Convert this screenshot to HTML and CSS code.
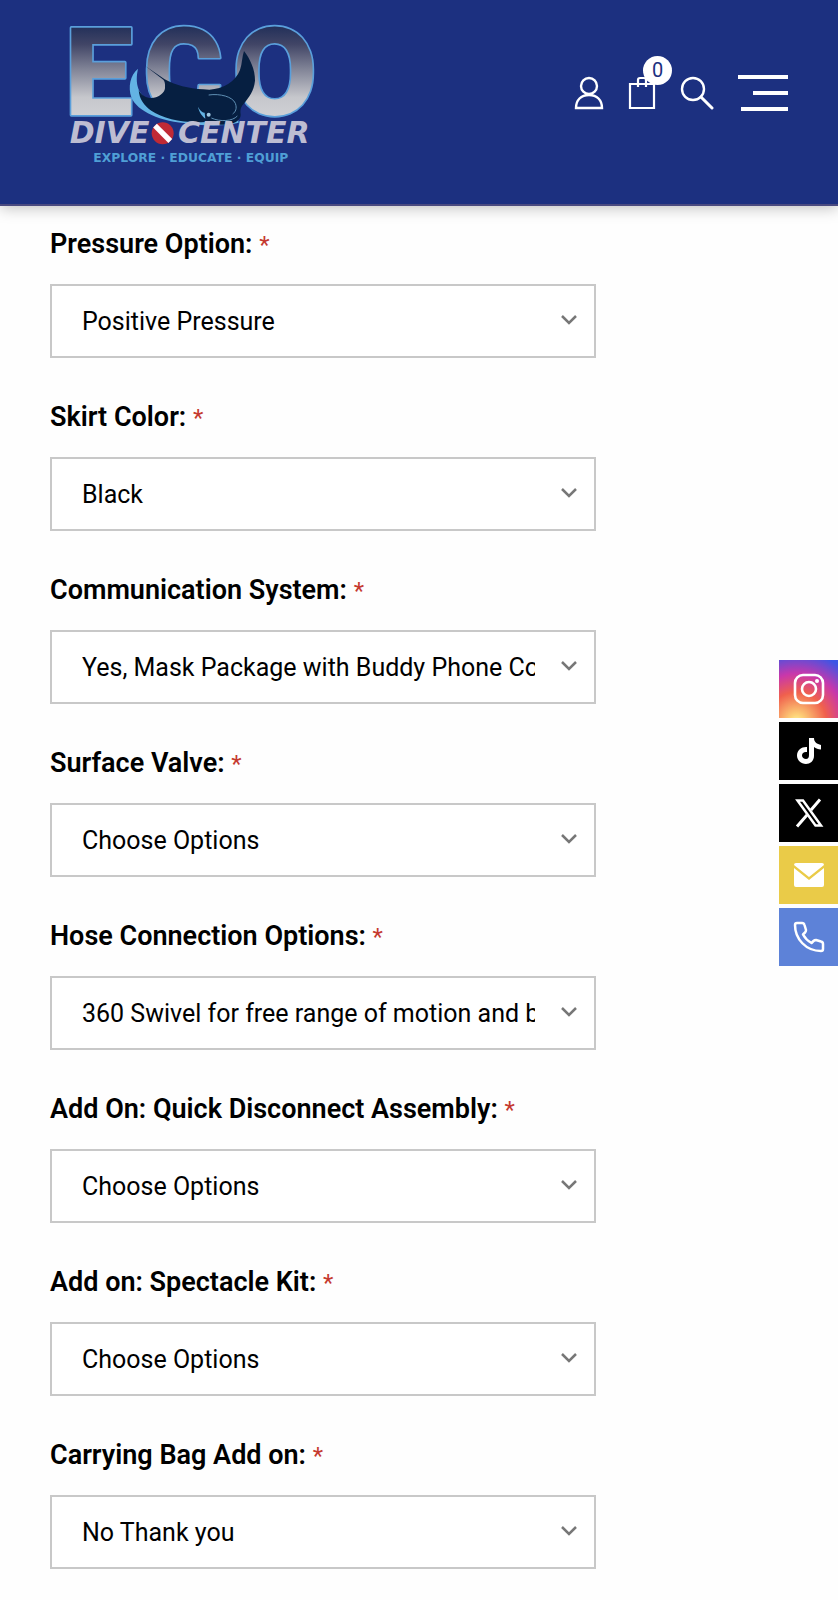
FILE: index.html
```html
<!DOCTYPE html>
<html lang="en">
  <head>
    <meta charset="UTF-8" />
    <meta name="viewport" content="width=device-width, initial-scale=1.0" />
    <title>Eco Dive Center</title>
    <link rel="stylesheet" href="styles.css">
  </head>
  <body>
    <header class="header">
      <a href="#" class="logo" aria-label="Eco Dive Center">
        <svg viewBox="0 0 870 510">
          <defs>
            <linearGradient id="metal" gradientUnits="userSpaceOnUse" x1="0" y1="50" x2="0" y2="315">
              <stop offset="0" stop-color="#23305a" />
              <stop offset="0.2" stop-color="#414566" />
              <stop offset="0.5" stop-color="#85889a" />
              <stop offset="0.8" stop-color="#c6c7cc" />
              <stop offset="1" stop-color="#cfd0d4" />
            </linearGradient>
          </defs>
          <text class="logo-eco" x="44 280 548" y="315">ECO</text>
          <path fill="#63b3e4" d="M264 176C240 195 234 232 244 262C262 305 330 335 420 341C460 347 520 350 566 338L560 300L300 270C264 256 254 220 264 176Z" />
          <path fill="#061f41" d="M286 168L344 208L356 214C390 230 430 238 478 239C520 237 556 216 570 180C577 160 576 140 582 123C600 146 616 180 615 212C612 244 596 262 584 278C572 290 570 298 572 314C572 328 560 340 530 344C500 346 490 338 466 336C400 340 340 326 304 302C282 286 268 268 266 240C276 262 300 268 318 262C334 256 346 244 345 232C346 220 344 214 340 209Z" />
          <path fill="none" stroke="#5f8fb4" stroke-width="3" d="M476 255C510 250 548 260 556 280C562 296 556 306 548 312M484 324C510 336 548 334 562 318" />
          <path fill="#63b3e4" d="M444 290C448 308 456 318 466 326L464 308C458 308 450 302 444 290Z" />
          <circle cx="476" cy="314" r="6" fill="#9fc9e4" />
          <text class="logo-name" x="59" y="399">DIVE</text>
          <text class="logo-name" x="384" y="399">CENTER</text>
          <circle cx="338" cy="370" r="33" fill="#c02a35" />
          <path stroke="#fff" stroke-width="16" d="M315 347L361 393" />
          <text class="logo-tag" x="130" y="455">EXPLORE · EDUCATE · EQUIP</text>
        </svg>
      </a>
      <nav class="nav">
        <a href="#" class="nav-link" aria-label="Account">
          <svg width="30" height="34" viewBox="0 0 30 34" fill="none" stroke="#fff" stroke-width="2.4">
            <circle cx="15" cy="10" r="8" />
            <path d="M2 32C2 24 7 19 15 19S28 24 28 32Z" />
          </svg>
        </a>
        <a href="#" class="nav-link" aria-label="Cart">
          <svg width="28" height="34" viewBox="0 0 28 34" fill="none" stroke="#fff" stroke-width="2.2">
            <path d="M2 8H26V32H2ZM10 11V4Q10 2 12 2H16Q18 2 18 4V11" />
          </svg>
          <span class="cart-count">0</span>
        </a>
        <button class="nav-link" aria-label="Search">
          <svg width="34" height="34" viewBox="0 0 34 34" fill="none" stroke="#fff" stroke-width="2.4">
            <circle cx="13" cy="13" r="11" />
            <path d="M21 21L32 32" stroke-width="3" stroke-linecap="round" />
          </svg>
        </button>
        <button class="menu-toggle" aria-label="Menu">
          <span class="bar"></span>
          <span class="bar bar-short"></span>
          <span class="bar bar-mid"></span>
        </button>
      </nav>
    </header>

    <main>
      <form class="options">
        <div class="field">
          <label for="pressure">Pressure Option: <small>*</small></label>
          <select id="pressure"><option>Positive Pressure</option></select>
        </div>
        <div class="field">
          <label for="skirt">Skirt Color: <small>*</small></label>
          <select id="skirt"><option>Black</option></select>
        </div>
        <div class="field">
          <label for="comm">Communication System: <small>*</small></label>
          <select id="comm"><option>Yes, Mask Package with Buddy Phone Communication</option></select>
        </div>
        <div class="field">
          <label for="valve">Surface Valve: <small>*</small></label>
          <select id="valve"><option>Choose Options</option></select>
        </div>
        <div class="field">
          <label for="hose">Hose Connection Options: <small>*</small></label>
          <select id="hose"><option>360 Swivel for free range of motion and better comfort</option></select>
        </div>
        <div class="field">
          <label for="disconnect">Add On: Quick Disconnect Assembly: <small>*</small></label>
          <select id="disconnect"><option>Choose Options</option></select>
        </div>
        <div class="field">
          <label for="spectacle">Add on: Spectacle Kit: <small>*</small></label>
          <select id="spectacle"><option>Choose Options</option></select>
        </div>
        <div class="field">
          <label for="bag">Carrying Bag Add on: <small>*</small></label>
          <select id="bag"><option>No Thank you</option></select>
        </div>
      </form>
    </main>

    <aside class="social">
      <a href="#" class="instagram" aria-label="Instagram">
        <svg viewBox="0 0 32 32" fill="none" stroke="#fff" stroke-width="2.6">
          <rect x="2" y="2" width="28" height="28" rx="8" />
          <circle cx="16" cy="16" r="7" />
          <circle cx="24" cy="8" r="2" fill="#fff" stroke="none" />
        </svg>
      </a>
      <a href="#" class="tiktok" aria-label="TikTok">
        <svg viewBox="0 0 32 32" fill="#fff">
          <path d="M16 3H21C21 7 24 9 28 10V14.500C25 14.500 23 13.500 21 12V21C21 26 17 29 13 29C8 29 4 25 4 20.500C4 15 9 11.500 14 12V17C11 16.500 9 18 9 20.500C9 22.500 11 24 13 24C15 24 16 22.500 16 20Z" />
        </svg>
      </a>
      <a href="#" class="twitter" aria-label="X">
        <svg viewBox="0 0 32 32" fill="none" stroke="#fff">
          <path stroke-width="2.500" d="M4.500 3.500H10L28 28.500H22.500Z" />
          <path stroke-width="3" d="M27 2.500L18 13M14 18L4 29.500" />
        </svg>
      </a>
      <a href="#" class="mail" aria-label="Email">
        <svg viewBox="0 0 32 32" fill="#fff">
          <path d="M3 4H29Q31 4 31 6L16 18L1 6Q1 4 3 4ZM1 9L16 21L31 9V26Q31 28 29 28H3Q1 28 1 26Z" />
        </svg>
      </a>
      <a href="#" class="phone" aria-label="Phone">
        <svg viewBox="0 0 32 32" fill="none" stroke="#fff" stroke-width="2.500" stroke-linejoin="round">
          <path d="M4 2H9Q11 2 11.500 4L13 9Q13 10.500 12 11.500L10 13.500Q13 19 18.500 22L20.500 20Q21.500 19 23 19L28 20.500Q30 21 30 23V28Q30 30 28 30C13 30 2 18 2 4Q2 2 4 2Z" />
        </svg>
      </a>
    </aside>
  </body>
</html>
```

FILE: styles.css
```css
:root {
  --navy: #1c3080;
  --border: #c8c8c8;
  --required: #c5392f;
}

* {
  box-sizing: border-box;
}

body {
  margin: 0;
  background-color: #fefefe;
  color: #000;
  font-family: Roboto, "Liberation Sans", sans-serif;
}

button {
  padding: 0;
  border: none;
  background: none;
  cursor: pointer;
}

.header {
  display: flex;
  justify-content: space-between;
  align-items: flex-start;
  padding: 10px 50px 24px;
  background-color: var(--navy);
  border-bottom: 2px solid #4a4a80;
  box-shadow: 0 2px 14px rgba(0, 0, 0, 0.25);
}

.logo svg {
  display: block;
  width: 290px;
}

.logo-eco {
  font-family: Roboto, sans-serif;
  font-size: 365px;
  font-weight: 900;
  fill: url(#metal);
  stroke: #5a9fdb;
  stroke-width: 10px;
  stroke-linejoin: round;
  paint-order: stroke;
}

.logo-name {
  font-family: "DejaVu Sans", sans-serif;
  font-size: 90px;
  font-weight: 700;
  font-style: italic;
  fill: #bdbdd2;
}

.logo-tag {
  font-family: "DejaVu Sans", sans-serif;
  font-size: 37px;
  font-weight: 700;
  fill: #4f9fd6;
}

.nav {
  display: flex;
  align-items: center;
  gap: 24px;
  padding-top: 65px;
}

.nav-link {
  position: relative;
}

.nav-link svg {
  display: block;
}

.cart-count {
  position: absolute;
  top: -20px;
  right: -16px;
  width: 29px;
  height: 29px;
  border-radius: 50%;
  background-color: #fff;
  color: var(--navy);
  font-size: 20px;
  line-height: 29px;
  text-align: center;
}

.menu-toggle {
  display: flex;
  flex-direction: column;
  align-items: flex-end;
  gap: 12px;
  width: 50px;
}

.bar {
  width: 100%;
  height: 4px;
  background-color: #fff;
}

.bar-short {
  width: 70%;
}

.bar-mid {
  width: 94%;
}

.options {
  padding: 22px 50px;
}

.field {
  width: 74%;
  margin-bottom: 43px;
}

label {
  display: block;
  margin-bottom: 24px;
  font-size: 27px;
  font-weight: 600;
  line-height: 32px;
}

label small {
  color: var(--required);
  font-size: 24px;
  font-weight: 400;
  line-height: 24px;
}

select {
  display: block;
  width: 100%;
  height: 74px;
  padding: 1px 59px 0 30px;
  appearance: none;
  border: 2px solid var(--border);
  border-radius: 0;
  background: #fff url("data:image/svg+xml,%3Csvg xmlns='http://www.w3.org/2000/svg' width='16' height='12' fill='none' stroke='%23777' stroke-width='2.5'%3E%3Cpath d='M1 1L8 8L15 1'/%3E%3C/svg%3E") no-repeat right 17px center;
  color: #000;
  font-family: inherit;
  font-size: 25px;
}

.social {
  position: fixed;
  top: 660px;
  right: 0;
  display: flex;
  flex-direction: column;
  gap: 4px;
}

.social a {
  display: flex;
  justify-content: center;
  align-items: center;
  width: 59px;
  height: 58px;
}

.social svg {
  width: 32px;
  height: 32px;
}

.instagram {
  background: radial-gradient(circle at 30% 107%, #fdf497 0%, #fdd077 10%, #f0604d 40%, #c837ab 65%, #3b55e6 95%);
}

.tiktok,
.twitter {
  background-color: #000;
}

.mail {
  background-color: #eacb48;
}

.phone {
  background-color: #5d82d8;
}
```
